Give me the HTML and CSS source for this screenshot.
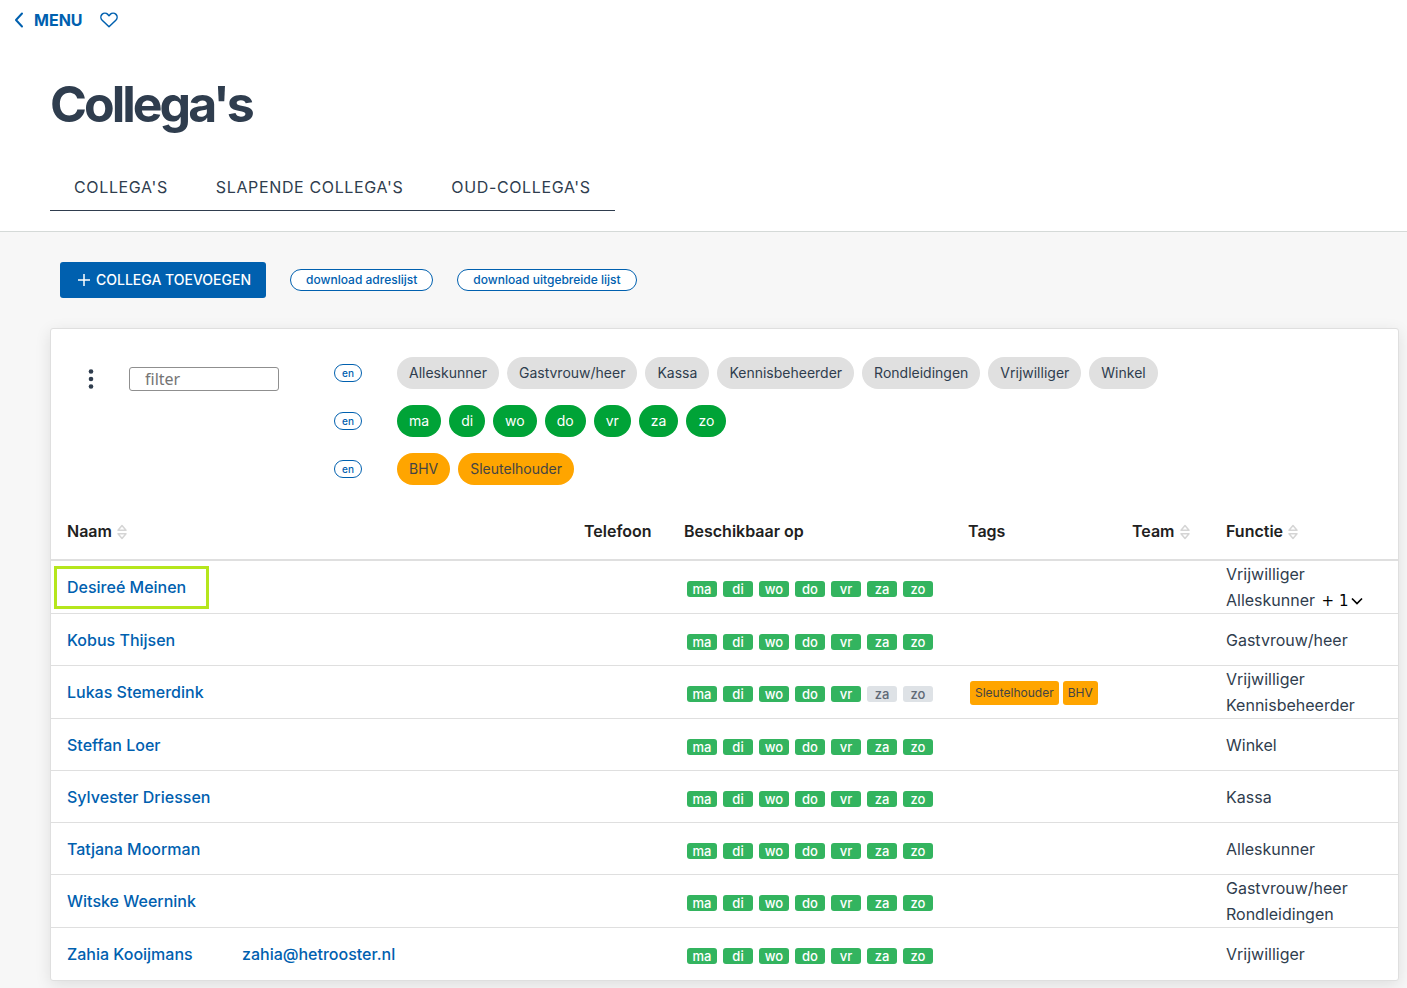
FILE: index.html
```html
<!DOCTYPE html>
<html lang="nl">
<head>
    <meta charset="UTF-8">
    <meta name="viewport" content="width=device-width, initial-scale=1.0">
    <title>Collega's</title>
    <link rel="stylesheet" href="styles.css">
</head>
<body>
    <header class="page-header">
        <nav class="topbar">
            <a href="#" class="menu-link">
                <svg width="10" height="16" viewBox="0 0 10 16" fill="none" stroke="currentColor" stroke-width="2" stroke-linecap="round" stroke-linejoin="round"><path d="M8 1.500L2 8L8 14.500"/></svg>
                MENU
            </a>
            <button type="button" class="icon-button" aria-label="Favoriet">
                <svg width="18" height="16" viewBox="0 0 18 16" fill="none" stroke="currentColor" stroke-width="1.500" stroke-linejoin="round"><path d="M9 14.700L2.200 8.200C.5 6.500.5 3.900 2 2.400 3.600.8 6.200.8 7.800 2.400L9 3.700l1.200-1.300c1.600-1.600 4.200-1.600 5.800 0 1.500 1.500 1.500 4.100-.2 5.800z"/></svg>
            </button>
        </nav>
        <h1>Collega's</h1>
        <nav class="tabs">
            <a href="#">COLLEGA'S</a>
            <a href="#">SLAPENDE COLLEGA'S</a>
            <a href="#">OUD-COLLEGA'S</a>
        </nav>
    </header>

    <main>
        <div class="actions">
            <button type="button" class="btn-primary">
                <svg width="12" height="12" viewBox="0 0 12 12" stroke="currentColor" stroke-width="1.500"><path d="M6 0v12M0 6h12"/></svg>
                COLLEGA TOEVOEGEN
            </button>
            <button type="button" class="btn-outline">download adreslijst</button>
            <button type="button" class="btn-outline">download uitgebreide lijst</button>
        </div>

        <section class="card">
            <div class="filters">
                <button type="button" class="icon-button more" aria-label="Meer opties">
                    <svg width="6" height="20" viewBox="0 0 6 20" fill="currentColor"><circle cx="3" cy="2.500" r="2.300"/><circle cx="3" cy="10" r="2.300"/><circle cx="3" cy="17.500" r="2.300"/></svg>
                </button>
                <input type="text" class="filter-input" placeholder="filter" aria-label="filter">
                <div class="filter-rows">
                    <div class="filter-row">
                        <button type="button" class="btn-en">en</button>
                        <div class="chips">
                            <button type="button" class="chip">Alleskunner</button>
                            <button type="button" class="chip">Gastvrouw/heer</button>
                            <button type="button" class="chip">Kassa</button>
                            <button type="button" class="chip">Kennisbeheerder</button>
                            <button type="button" class="chip">Rondleidingen</button>
                            <button type="button" class="chip">Vrijwilliger</button>
                            <button type="button" class="chip">Winkel</button>
                        </div>
                    </div>
                    <div class="filter-row">
                        <button type="button" class="btn-en">en</button>
                        <div class="chips">
                            <button type="button" class="chip green">ma</button>
                            <button type="button" class="chip green">di</button>
                            <button type="button" class="chip green">wo</button>
                            <button type="button" class="chip green">do</button>
                            <button type="button" class="chip green">vr</button>
                            <button type="button" class="chip green">za</button>
                            <button type="button" class="chip green">zo</button>
                        </div>
                    </div>
                    <div class="filter-row">
                        <button type="button" class="btn-en">en</button>
                        <div class="chips">
                            <button type="button" class="chip orange">BHV</button>
                            <button type="button" class="chip orange">Sleutelhouder</button>
                        </div>
                    </div>
                </div>
            </div>

            <table>
                <colgroup>
                    <col class="col-name">
                    <col>
                    <col class="col-phone">
                    <col class="col-days">
                    <col class="col-tags">
                    <col class="col-team">
                    <col class="col-role">
                </colgroup>
                <thead>
                    <tr>
                        <th>Naam <svg class="sort" width="12" height="16" viewBox="0 0 12 16"><path d="M2 6.200L6 1.500L10 6.200zM2 9.800L6 14.500L10 9.800z"/></svg></th>
                        <th></th>
                        <th>Telefoon</th>
                        <th>Beschikbaar op</th>
                        <th>Tags</th>
                        <th>Team <svg class="sort" width="12" height="16" viewBox="0 0 12 16"><path d="M2 6.200L6 1.500L10 6.200zM2 9.800L6 14.500L10 9.800z"/></svg></th>
                        <th>Functie <svg class="sort" width="12" height="16" viewBox="0 0 12 16"><path d="M2 6.200L6 1.500L10 6.200zM2 9.800L6 14.500L10 9.800z"/></svg></th>
                    </tr>
                </thead>
                <tbody>
                    <tr>
                        <td><a href="#" class="highlight">Desireé Meinen</a></td>
                        <td></td>
                        <td></td>
                        <td><div class="days"><span>ma</span><span>di</span><span>wo</span><span>do</span><span>vr</span><span>za</span><span>zo</span></div></td>
                        <td></td>
                        <td></td>
                        <td>Vrijwilliger<br>Alleskunner <button type="button" class="expand">+ 1<svg width="12" height="8" viewBox="0 0 12 8" fill="none" stroke="currentColor" stroke-width="1.700"><path d="M1 1.500l5 5 5-5"/></svg></button></td>
                    </tr>
                    <tr>
                        <td><a href="#">Kobus Thijsen</a></td>
                        <td></td>
                        <td></td>
                        <td><div class="days"><span>ma</span><span>di</span><span>wo</span><span>do</span><span>vr</span><span>za</span><span>zo</span></div></td>
                        <td></td>
                        <td></td>
                        <td>Gastvrouw/heer</td>
                    </tr>
                    <tr>
                        <td><a href="#">Lukas Stemerdink</a></td>
                        <td></td>
                        <td></td>
                        <td><div class="days"><span>ma</span><span>di</span><span>wo</span><span>do</span><span>vr</span><span class="off">za</span><span class="off">zo</span></div></td>
                        <td><div class="tags"><span>Sleutelhouder</span><span>BHV</span></div></td>
                        <td></td>
                        <td>Vrijwilliger<br>Kennisbeheerder</td>
                    </tr>
                    <tr>
                        <td><a href="#">Steffan Loer</a></td>
                        <td></td>
                        <td></td>
                        <td><div class="days"><span>ma</span><span>di</span><span>wo</span><span>do</span><span>vr</span><span>za</span><span>zo</span></div></td>
                        <td></td>
                        <td></td>
                        <td>Winkel</td>
                    </tr>
                    <tr>
                        <td><a href="#">Sylvester Driessen</a></td>
                        <td></td>
                        <td></td>
                        <td><div class="days"><span>ma</span><span>di</span><span>wo</span><span>do</span><span>vr</span><span>za</span><span>zo</span></div></td>
                        <td></td>
                        <td></td>
                        <td>Kassa</td>
                    </tr>
                    <tr>
                        <td><a href="#">Tatjana Moorman</a></td>
                        <td></td>
                        <td></td>
                        <td><div class="days"><span>ma</span><span>di</span><span>wo</span><span>do</span><span>vr</span><span>za</span><span>zo</span></div></td>
                        <td></td>
                        <td></td>
                        <td>Alleskunner</td>
                    </tr>
                    <tr>
                        <td><a href="#">Witske Weernink</a></td>
                        <td></td>
                        <td></td>
                        <td><div class="days"><span>ma</span><span>di</span><span>wo</span><span>do</span><span>vr</span><span>za</span><span>zo</span></div></td>
                        <td></td>
                        <td></td>
                        <td>Gastvrouw/heer<br>Rondleidingen</td>
                    </tr>
                    <tr>
                        <td><a href="#">Zahia Kooijmans</a></td>
                        <td><a href="#">zahia@hetrooster.nl</a></td>
                        <td></td>
                        <td><div class="days"><span>ma</span><span>di</span><span>wo</span><span>do</span><span>vr</span><span>za</span><span>zo</span></div></td>
                        <td></td>
                        <td></td>
                        <td>Vrijwilliger</td>
                    </tr>
                </tbody>
            </table>
        </section>
    </main>
</body>
</html>
```
FILE: styles.css
```css
* {
    box-sizing: border-box;
}
body {
    margin: 0;
    font-family: Inter, sans-serif;
    font-size: 16px;
    line-height: 26px;
    color: #2f3d4e;
    background-color: #f7f7f7;
}
a {
    color: #0060af;
    text-decoration: none;
}
button {
    font-family: inherit;
    cursor: pointer;
}
svg {
    flex: none;
}
.page-header {
    background-color: white;
    border-bottom: 1px solid #d5dad8;
    padding-bottom: 20px;
}
.topbar {
    display: flex;
    align-items: center;
    gap: 17px;
    height: 40px;
    padding-left: 14px;
}
.menu-link {
    display: flex;
    align-items: center;
    gap: 10px;
    font-weight: 700;
}
.icon-button {
    display: flex;
    padding: 0;
    border: none;
    background: none;
    color: #0060af;
}
h1 {
    margin: 32px 50px 28px;
    font-size: 50px;
    line-height: 64px;
    font-weight: 700;
    letter-spacing: -3px;
}
.tabs {
    display: inline-flex;
    margin-left: 50px;
    border-bottom: 1px solid #2f3d4e;
    vertical-align: top;
}
.tabs a {
    padding: 10px 24px;
    color: #2f3d4e;
    letter-spacing: 0.04em;
}
main {
    padding: 30px 8px 7px 50px;
}
.actions {
    display: flex;
    align-items: center;
    gap: 24px;
    margin: 0 10px 30px;
}
.btn-primary {
    display: flex;
    align-items: center;
    gap: 6px;
    height: 36px;
    padding: 0 15px 1px 18px;
    border: none;
    border-radius: 3px;
    background-color: #0060af;
    color: white;
    font-size: 14px;
    font-weight: 500;
}
.btn-outline {
    height: 22px;
    padding: 0 15px 1px;
    border: 1px solid #0060af;
    border-radius: 11px;
    background-color: white;
    color: #0060af;
    font-size: 12px;
    font-weight: 500;
}
.card {
    border: 1px solid #dfdfdf;
    border-radius: 3px;
    background-color: white;
    box-shadow: 0 4px 16px rgba(0, 0, 0, 0.1);
}
.filters {
    display: flex;
    align-items: flex-start;
    padding: 28px 36px 2px;
}
.more {
    width: 6px;
    margin: 12px 35px 0 1px;
    color: #2f3d4e;
}
.filter-input {
    width: 150px;
    height: 24px;
    margin: 10px 55px 0 0;
    padding: 0 15px;
    border: 1px solid #8f8f8f;
    border-radius: 3px;
    font-family: "Noto Sans", sans-serif;
    font-size: 16px;
}
.filter-input::placeholder {
    color: #757575;
}
.filter-row {
    display: flex;
    align-items: center;
    gap: 35px;
    margin-bottom: 16px;
}
.btn-en {
    width: 28px;
    height: 18px;
    padding: 0;
    border: 1px solid #0060af;
    border-radius: 9px;
    background-color: white;
    color: #0060af;
    font-size: 10px;
    font-weight: 500;
}
.chips {
    display: flex;
    flex-wrap: wrap;
    gap: 8px;
}
.chip {
    height: 32px;
    padding: 0 12px 2px;
    border: none;
    border-radius: 16px;
    background-color: #e0e0e0;
    color: #2f3d4e;
    font-size: 14px;
}
.chip.green {
    background-color: #00a337;
    color: white;
}
.chip.orange {
    background-color: #ffa500;
    color: #444;
}
table {
    width: 100%;
    table-layout: fixed;
    border-collapse: collapse;
}
.col-name {
    width: 175px;
}
.col-phone {
    width: 100px;
}
.col-days {
    width: 284px;
}
.col-tags {
    width: 164px;
}
.col-team {
    width: 94px;
}
.col-role {
    width: 188px;
}
th {
    height: 57px;
    padding: 0 16px;
    border-bottom: 2px solid #dfdfdf;
    color: #212121;
    font-weight: 600;
    text-align: left;
    white-space: nowrap;
}
td {
    height: 52px;
    padding: 0 16px;
    border-bottom: 1px solid #dfdfdf;
    white-space: nowrap;
}
tbody tr:last-child td {
    border-bottom: none;
}
td a {
    font-weight: 500;
}
.sort {
    fill: none;
    stroke: #d5d5d5;
    stroke-width: 1.5px;
    stroke-linejoin: round;
    vertical-align: -3px;
}
.highlight {
    display: inline-block;
    margin-left: -13px;
    padding: 5px 20px 6px 10px;
    border: 3px solid #b5e61d;
    vertical-align: top;
}
.days {
    display: flex;
    gap: 6px;
    padding: 4px 3px 0;
}
.days span {
    width: 30px;
    height: 16px;
    border-radius: 3px;
    background-color: #33b45f;
    color: white;
    font-size: 13px;
    font-weight: 500;
    line-height: 16px;
    text-align: center;
}
.days .off {
    background-color: #dee2e6;
    color: #5f6975;
}
.tags {
    display: flex;
    gap: 4px;
    padding: 2px 0 0 2px;
}
.tags span {
    padding: 0 5px;
    border-radius: 3px;
    background-color: #ffa500;
    color: #444;
    font-size: 12px;
    line-height: 24px;
}
.expand {
    display: inline-flex;
    align-items: center;
    gap: 3px;
    margin-left: 2px;
    padding: 0;
    border: none;
    background: none;
    color: black;
    font-family: "DejaVu Sans", sans-serif;
    font-size: 15px;
}
```
